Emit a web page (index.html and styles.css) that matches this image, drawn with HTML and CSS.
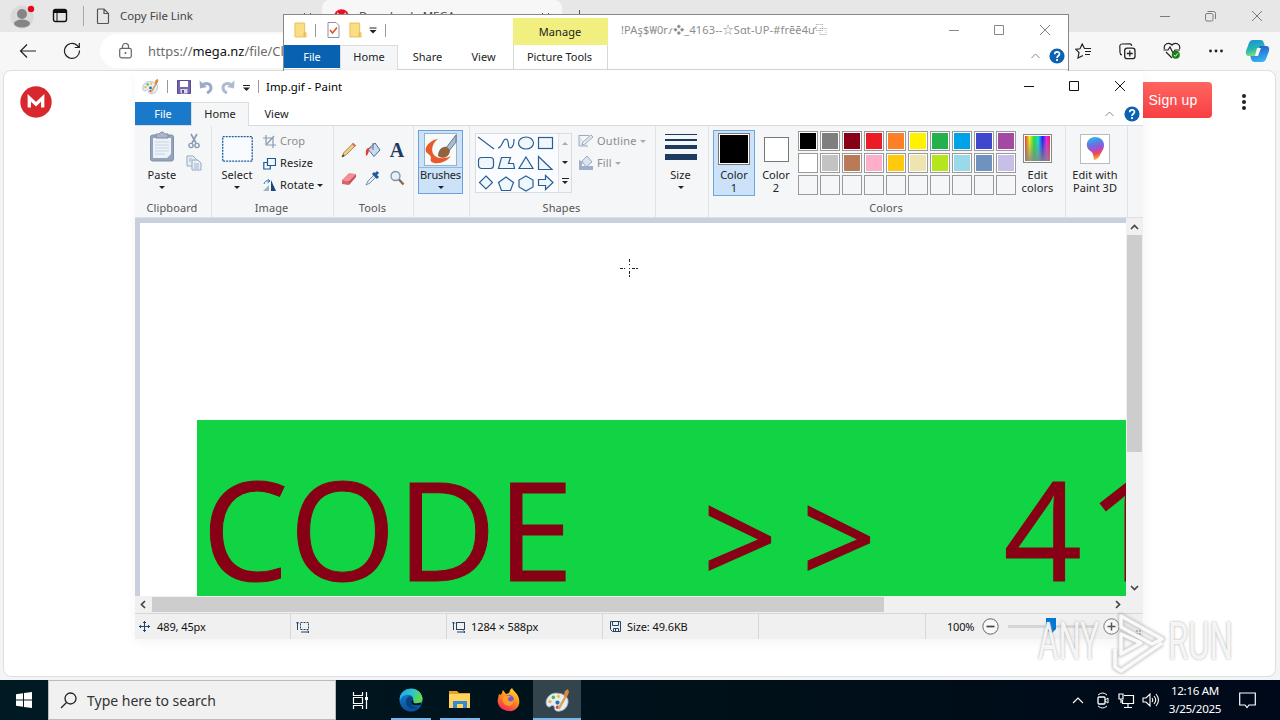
FILE: index.html
```html
<!DOCTYPE html>
<html lang="en">
<head>
<meta charset="utf-8">
<title>Desktop</title>
<link rel="stylesheet" href="styles.css">
</head>
<body>
<svg class="defs" width="0" height="0">
  <defs>
    <linearGradient id="rainbow"><stop offset="0" stop-color="#e33"/><stop offset=".18" stop-color="#ee2"/><stop offset=".36" stop-color="#2d3"/><stop offset=".53" stop-color="#1dd"/><stop offset=".7" stop-color="#22e"/><stop offset=".86" stop-color="#e2e"/><stop offset="1" stop-color="#e23"/></linearGradient>
    <linearGradient id="greyfade" x2="0" y2="1"><stop offset=".1" stop-color="#888" stop-opacity="0"/><stop offset="1" stop-color="#888" stop-opacity=".85"/></linearGradient>
    <linearGradient id="edge1" x1="0" x2="1" y2=".3"><stop offset="0" stop-color="#1fa6e8"/><stop offset=".6" stop-color="#2fc8c0"/><stop offset="1" stop-color="#65d84a"/></linearGradient>
    <linearGradient id="edge2" x2="0" y2="1"><stop offset="0" stop-color="#1483d8"/><stop offset="1" stop-color="#0b4f9c"/></linearGradient>
    <linearGradient id="fire" x1=".8" x2=".3" y2="1"><stop offset="0" stop-color="#ffe226"/><stop offset=".5" stop-color="#ff8a1d"/><stop offset="1" stop-color="#f5225c"/></linearGradient>
    <linearGradient id="cop1" x2=".3" y2="1"><stop offset="0" stop-color="#1b8be0"/><stop offset=".6" stop-color="#23b7b0"/><stop offset="1" stop-color="#7fdc7c"/></linearGradient>
    <linearGradient id="cop2" x2=".3" y2="1"><stop offset="0" stop-color="#2253c7"/><stop offset="1" stop-color="#32b0f2"/></linearGradient>
    <linearGradient id="p3d" x2=".2" y2="1"><stop offset="0" stop-color="#29c5f0"/><stop offset=".35" stop-color="#5a7de0"/><stop offset=".6" stop-color="#a44fd0"/><stop offset=".8" stop-color="#f0465a"/><stop offset="1" stop-color="#fca32c"/></linearGradient>
    <filter id="soft" x="-10%" y="-10%" width="120%" height="120%"><feGaussianBlur stdDeviation="1.1"/></filter>
    <symbol id="palette" viewBox="0 0 24 24"><path d="M12 5C6 4 1 9 1 14c0 3 2 5 4 4 2-2 4-1 4 1 0 3 3 4 6 3 5-1 8-6 7-11-1-3-5-6-10-6z" fill="#e9edf2" stroke="#8aa5bf" stroke-width=".8"/><circle cx="8" cy="9" r="1.7" fill="#56b947"/><circle cx="4.800" cy="13" r="1.600" fill="#e8b64a"/><circle cx="12" cy="14" r="2" fill="#2473b8"/><circle cx="12" cy="18.500" r="1.600" fill="#d43d36"/><circle cx="13" cy="8" r="1.500" fill="#f0c030"/><path d="M20 8l-7 12" stroke="#d9a05c" stroke-width="2.400"/><path d="M18 8l1-5 3-2 1 3-2 5z" fill="#d9873b"/></symbol>
    <symbol id="folder" viewBox="0 0 14 16"><path d="M1 .5h10.500V11H13v4.500H1z" fill="#fbdd84" stroke="#e6bd55"/><path d="M11 11v4" stroke="#d9a93b"/></symbol>
    <symbol id="help" viewBox="0 0 16 16"><circle cx="8" cy="8" r="7.600" fill="#0b62b3"/><path d="M5.700 6.300c0-3.200 4.800-3.100 4.800-.3C10.500 7.800 8 7.800 8 10" fill="none" stroke="#fff" stroke-width="1.700"/><rect x="7.100" y="11.100" width="1.800" height="1.900" fill="#fff"/></symbol>
    <symbol id="winbtns" viewBox="0 0 110 12"><path d="M2 6.500h10M47.500 1.500h9v9h-9zM93 1l10 10M103 1L93 11" fill="none" stroke="currentColor"/></symbol>
    <path id="playmark" d="M87 7l41 23-10 5-31-17zM87 25v20l20-11zM81 40v18l6 4 41-28"/>
  </defs>
</svg>
<div class="screen">

  <section class="browser">
    <header class="tabstrip">
      <svg class="avatar" width="26" height="26" viewBox="0 0 26 26"><circle cx="12" cy="14" r="11.500" fill="#d9d9d9"/><circle cx="12" cy="11" r="5" fill="#858585"/><ellipse cx="12" cy="20.500" rx="8" ry="4" fill="#858585"/><circle cx="21" cy="6" r="3.200" fill="#e00b16"/></svg>
      <svg class="workspaces" width="16" height="16" viewBox="0 0 16 16"><path d="M1.500 3.500q0-2 2-2h9q2 0 2 2v8q0 2-2 2h-9q-2 0-2-2z" fill="none" stroke="#111" stroke-width="1.400"/><path d="M2 3.500h12" stroke="#111" stroke-width="3"/><path d="M5 3v10" stroke="#111"/></svg>
      <i class="tab-divider"></i>
      <div class="tab">
        <svg width="14" height="17" viewBox="0 0 14 17"><path d="M1.500 2q0-1 1-1h5.500l4.500 4.500v9q0 1-1 1h-9q-1 0-1-1zM8 1v4.500h4.500" fill="none" stroke="#555" stroke-width="1.200"/></svg>
        <span>Copy File Link</span>
        <svg class="tab-x" width="9" height="9" viewBox="0 0 9 9"><path d="M1 1l7 7M8 1L1 8" stroke="#555"/></svg>
      </div>
      <div class="tab tab-on">
        <svg width="15" height="15" viewBox="0 0 15 15"><circle cx="7.500" cy="7.500" r="7.300" fill="#ea0f21"/><path d="M4 10V5l3.500 3.500L11 5v5" fill="none" stroke="#fff" stroke-width="1.500"/></svg>
        <span>Download - MEGA</span>
        <svg class="tab-x" width="9" height="9" viewBox="0 0 9 9"><path d="M1 1l7 7M8 1L1 8" stroke="#555"/></svg>
      </div>
      <i class="newtab"></i>
      <svg class="browser-win" width="104" height="12" viewBox="0 0 104 12"><g fill="none" stroke="#7b7b7b"><path d="M1 6.500h10M93 1l10 10M103 1L93 11"/><rect x="46.500" y="3.500" width="7.500" height="7.500" rx="1.500"/><path d="M48.500 1.500h6q2 0 2 2v5.500"/></g></svg>
    </header>
    <div class="toolbar">
      <svg width="18" height="16" viewBox="0 0 18 16"><path d="M1.500 8H17M8 1.500L1.500 8 8 14.500" fill="none" stroke="#222" stroke-width="1.200"/></svg>
      <svg class="reload" width="18" height="18" viewBox="0 0 18 18"><path d="M16.500 8.500a7.500 7.500 0 1 1-2.300-5L16 5.300M16.300 1v4.500h-4.500" fill="none" stroke="#222" stroke-width="1.200"/></svg>
      <div class="address">
        <svg width="13" height="16" viewBox="0 0 13 16"><rect x=".7" y="5.300" width="11.600" height="9.500" rx="1.800" fill="none" stroke="#666" stroke-width="1.200"/><path d="M3.500 5V3.500a3 3 0 0 1 6 0V5" fill="none" stroke="#666" stroke-width="1.200"/><circle cx="6.500" cy="10" r="1" fill="#666"/></svg>
        <span class="url">https://<b>mega.nz</b>/file/ClxQXJ</span>
      </div>
      <div class="tools">
        <svg width="17" height="16" viewBox="0 0 17 16"><path d="M16 5.500H9.500L7.200 1 5 5.800.8 6.300 4 9.500 3 15l5-2.500M10 8.500h6M10 11.500h5" fill="none" stroke="#222" stroke-width="1.200"/></svg>
        <svg width="17" height="17" viewBox="0 0 17 17"><path d="M3 12Q1 11.500 1 9.500L.8 3q.2-2 2-2l8-.2q1.600 0 2 2" fill="none" stroke="#222" stroke-width="1.200"/><rect x="5.700" y="5.200" width="10.300" height="10.500" rx="2.500" fill="none" stroke="#222" stroke-width="1.300"/><path d="M10.800 7.500v6M7.800 10.500h6" stroke="#222" stroke-width="1.300"/></svg>
        <svg width="18" height="18" viewBox="0 0 18 18"><path d="M1.500 7C0 2 6-.5 9 3c3-3.500 9-1 7.500 4M.5 8H5l2-3 3 6 2-3h5M3 10l6 6" fill="none" stroke="#222" stroke-width="1.200"/><circle cx="12.800" cy="12.800" r="4" fill="#168016"/><path d="M10.800 13l1.500 1.300 2.700-3" fill="none" stroke="#fff"/></svg>
        <svg width="16" height="4" viewBox="0 0 16 4"><g fill="#222"><circle cx="2.500" cy="2" r="1.400"/><circle cx="8" cy="2" r="1.400"/><circle cx="13.500" cy="2" r="1.400"/></g></svg>
      </div>
      <svg class="copilot" width="25" height="24" viewBox="0 0 25 24"><path d="M10 1h6q2 0 3 3l1 4h-5q-2 0-3 4l-1 5H4q-4 0-3-5l3-8q1-3 4-3z" fill="url(#cop1)"/><path d="M15 23H9q-2 0-3-3l-.6-3H10q2 0 3-4l1.500-6H21q4 0 3 5l-3 8q-1 3-4 3z" fill="url(#cop2)"/><path d="M12 9h4l-3 8h-3z" fill="#f7f7f7"/></svg>
    </div>
    <div class="viewport">
      <div class="webpage">
        <svg class="mega" width="32" height="32" viewBox="0 0 32 32"><circle cx="16" cy="16" r="15.700" fill="#d9272e"/><path d="M9.300 21.500V11.800l6.700 6.500 6.700-6.500v9.700" fill="none" stroke="#fff" stroke-width="3.300"/></svg>
        <button class="signup">Sign up</button>
        <svg class="kebab" width="6" height="18" viewBox="0 0 6 18"><g fill="#222"><circle cx="3" cy="3" r="2"/><circle cx="3" cy="9" r="2"/><circle cx="3" cy="15" r="2"/></g></svg>
      </div>
    </div>
  </section>

  <section class="explorer">
    <div class="ex-left">
      <div class="ex-quick">
        <svg width="13" height="16"><use href="#folder"/></svg><i class="vline"></i>
        <svg class="gap-a" width="13" height="16" viewBox="0 0 13 16"><path d="M1 .5h8l3 3v12H1z" fill="#fff" stroke="#8d93a0"/><path d="M3 8l2.500 3L10 5.500" fill="none" stroke="#e1542e" stroke-width="1.700"/></svg>
        <svg class="gap-b" width="13" height="16"><use href="#folder"/></svg>
        <svg class="gap-c" width="8" height="7" viewBox="0 0 8 7"><path d="M.5 1h7" stroke="#222"/><path d="M.5 3h7L4 6.500z" fill="#222"/></svg>
        <i class="vline gap-d"></i>
      </div>
      <nav class="ex-tabs"><span class="file">File</span><span class="home">Home</span><span class="share">Share</span><span class="view">View</span></nav>
    </div>
    <div class="ex-manage"><span class="manage">Manage</span><span class="pictools">Picture Tools</span></div>
    <div class="ex-right">
      <div class="ex-title"><span>!PAş$₩0r𐑥❖_4163--☆Sɑt-UP-#frēē4ư<b>⿻</b></span><svg width="110" height="12"><use href="#winbtns"/></svg></div>
      <div class="ex-help"><svg width="9" height="6" viewBox="0 0 9 6"><path d="M.5 5l4-4 4 4" fill="none" stroke="#888"/></svg><svg width="16" height="16"><use href="#help"/></svg></div>
    </div>
  </section>

  <section class="paint">
    <header class="titlebar">
      <svg class="app" width="17" height="17"><use href="#palette"/></svg><i class="vline"></i>
      <svg class="save" width="14" height="14" viewBox="0 0 14 14"><path d="M.5.500h13v13H.500z" fill="#7965ae" stroke="#5b4897"/><rect x="3" y="1" width="8" height="6" fill="#fff"/><rect x="3.500" y="9" width="7" height="4.500" fill="#d8dbe8"/><rect x="5" y="10" width="2" height="3" fill="#5b4897"/></svg>
      <svg class="undo" width="14" height="14" viewBox="0 0 14 14"><path d="M3 5c5-3 9-1 9 3 0 2.500-2 4-4 5" fill="none" stroke="#9aacc9" stroke-width="3"/><path d="M.5.500L1 8.500 8 7z" fill="#9aacc9"/></svg>
      <svg class="redo" width="14" height="14" viewBox="0 0 14 14"><path d="M11 5C6 2 2 4 2 8c0 2.500 2 4 4 5" fill="none" stroke="#adbbd1" stroke-width="3"/><path d="M13.500.500L13 8.500 6 7z" fill="#adbbd1"/></svg>
      <svg class="drop" width="7" height="6" viewBox="0 0 7 6"><path d="M0 .5h7" stroke="#222"/><path d="M0 2.500h7L3.500 6z" fill="#222"/></svg>
      <i class="vline vl2"></i>
      <h1>Imp.gif - Paint</h1>
      <svg class="winbtns" width="110" height="12"><use href="#winbtns"/></svg>
    </header>
    <nav class="tabs"><span class="file">File</span><span class="home">Home</span><span class="view">View</span>
      <div class="tabs-end"><svg width="9" height="6" viewBox="0 0 9 6"><path d="M.5 5l4-4 4 4" fill="none" stroke="#888"/></svg><svg width="16" height="16"><use href="#help"/></svg></div>
    </nav>

    <div class="ribbon">
      <div class="group g-clip">
        <div class="body">
          <div class="big paste">
            <svg width="26" height="32" viewBox="0 0 26 32"><rect x="1.500" y="4" width="23" height="26" rx="2" fill="#95a3bb" stroke="#8291ab"/><path d="M4 7h18v16l-4 4H4z" fill="#edf1f8"/><path d="M6 11h14M6 14h14M6 17h14M6 20h14M6 23h10" stroke="#c9d4e6"/><path d="M7 3h3q3-4 6 0h3v4H7z" fill="#aab5c8" stroke="#7e8ba2"/></svg>
            <span>Paste</span><i class="arrow"></i>
          </div>
          <div class="cutcopy">
            <svg width="12" height="16" viewBox="0 0 12 16"><path d="M3 1l5 9M9 1l-5 9" stroke="#8c99b3" stroke-width="1.600"/><circle cx="3" cy="12.500" r="2.100" fill="none" stroke="#8c99b3" stroke-width="1.400"/><circle cx="9" cy="12.500" r="2.100" fill="none" stroke="#8c99b3" stroke-width="1.400"/></svg>
            <svg width="16" height="16" viewBox="0 0 16 16"><path d="M1 1h6l3 3v7H1z" fill="#e9eef6" stroke="#9aa8c0"/><path d="M6 5h6l3 3v7H6z" fill="#e9eef6" stroke="#9aa8c0"/><path d="M3 4h3M3 6h2M8 9h5M8 11h5M8 13h5" stroke="#9fb2d3"/></svg>
          </div>
        </div>
        <h2>Clipboard</h2>
      </div>
      <div class="group g-image">
        <div class="body">
          <div class="big select">
            <svg width="31" height="26" viewBox="0 0 31 26"><rect x=".7" y=".7" width="29.500" height="24.500" fill="#f8fbff" stroke="#1d5c9c" stroke-width="1.300" stroke-dasharray="2 1"/></svg>
            <span>Select</span><i class="arrow"></i>
          </div>
          <div class="stack">
            <div class="dim"><svg width="13" height="13" viewBox="0 0 13 13"><path d="M3 0v10h10M0 3h10v10M4 9l7-8" fill="none" stroke="#8a9ab3" stroke-width="1.200"/></svg><span>Crop</span></div>
            <div><svg width="13" height="13" viewBox="0 0 13 13"><path d="M4.500 1.500h8v7h-8zM4 5.500H.8V12h6.500V9" fill="#f2f8ff" stroke="#20598f" stroke-width="1.200"/></svg><span class="resize">Resize</span></div>
            <div><svg width="13" height="13" viewBox="0 0 13 13"><path d="M0 12h6V6z" fill="#9db4c8"/><path d="M8 1v11h5z" fill="#174b7c"/><path d="M1 5q1-4 5-3M4.500 0L7 2 4.500 4" fill="none" stroke="#2a6db0"/></svg><span class="rotate">Rotate</span><i class="arrow"></i></div>
          </div>
        </div>
        <h2>Image</h2>
      </div>
      <div class="group g-tools">
        <div class="body toolgrid">
          <svg width="16" height="16" viewBox="0 0 16 16"><path d="M1 15l2-4.500 9-9 2.200 2.200-9 9z" fill="#f3d28a" stroke="#8c6a2b" stroke-width=".8"/><path d="M1 15l1-2.500L3.500 14z" fill="#222"/><path d="M11.500 1.500l3 2.800" stroke="#d76f5f" stroke-width="2"/></svg>
          <svg width="16" height="16" viewBox="0 0 16 16"><path d="M3 7l7-6 5 7-6 6.500z" fill="#c7dcef" stroke="#4e7093"/><path d="M8 1v7" stroke="#56728c"/><path d="M4 6C1 6 .5 9 1 14c2-1 3-4 3-7l5-2z" fill="#d9432e"/></svg>
          <b class="letter">A</b>
          <svg width="16" height="16" viewBox="0 0 16 16"><path d="M1 10l7-7 7 1-7 7z" fill="#ef8f96"/><path d="M1 10l7 1v4l-7-1z" fill="#d9646b"/><path d="M8 11l7-7v3l-7 8z" fill="#c84e57"/></svg>
          <svg width="16" height="16" viewBox="0 0 16 16"><path d="M1 15l2-4 6-6 2 2-6 6z" fill="#e4edf5" stroke="#54789c" stroke-width=".8"/><path d="M8 3l5 5M10 5l3-3" stroke="#1d5ca0" stroke-width="3"/></svg>
          <svg width="16" height="16" viewBox="0 0 16 16"><circle cx="6.500" cy="6" r="4.500" fill="#e3f0fa" stroke="#8391a0" stroke-width="1.300"/><path d="M10 9.500l4.500 5" stroke="#80684f" stroke-width="2.300"/></svg>
        </div>
        <h2>Tools</h2>
      </div>
      <div class="group g-brush">
        <div class="brush-btn">
          <svg width="33" height="33" viewBox="0 0 33 33"><rect x=".5" y=".5" width="32" height="32" fill="#f7fafb" stroke="#9bb1c6"/><path d="M14 6C7 7 0 13 2 19c2 2 5 3 5 6-1 3 0 4 3 5 7 1 13-2 17-7-6 3-12 3-16 0-5-4-3-13 3-17z" fill="#e85a29"/><path d="M32 2L22 15l3 3 7-9z" fill="#aebdc9" stroke="#60798f"/><path d="M23 14c-5-1-9 3-9 9 5 4 12 1 12-6z" fill="#91643e"/></svg>
          <span>Brushes</span><i class="arrow"></i>
        </div>
      </div>
      <div class="group g-shapes">
        <div class="body">
          <div class="gallery">
            <svg width="82" height="58" viewBox="0 0 82 58"><g fill="#eff6fc" stroke="#2b5f94" stroke-width="1.200"><path d="M2 3l16 12" /><path d="M22 14c5-1 4-9 8-9 4 1 1 9 4 9 3 0 4-3 4-9" fill="none"/><ellipse cx="50" cy="9" rx="7.500" ry="6"/><rect x="62.500" y="3.500" width="14" height="11"/><rect x="2.500" y="23.500" width="15" height="11" rx="3"/><path d="M22.500 34.500l3-11h9l-2 6h5l1 5z"/><path d="M50 23l7 11.500H43z"/><path d="M62.500 22.500v13h13.500z"/><path d="M10 42l6.500 6.500L10 55l-6.500-6.500z"/><path d="M30 43l7.500 5.500-3 8h-9l-3-8z"/><path d="M50 42l7 4v7l-7 4-7-4v-7z"/><path d="M62.500 45.500h7v-4l7.500 7-7.500 7v-4h-7z"/></g></svg>
            <div class="gscroll"><i class="up"></i><i class="arrow"></i><i class="arrow bar"></i></div>
          </div>
          <div class="stack dim">
            <div><svg width="16" height="14" viewBox="0 0 16 14"><path d="M1 1.500h10M1 1v11h9M4 11l1-3 8-7 2 2-8 7z" fill="#e2e8f0" stroke="#9eabc0"/></svg><span class="outline">Outline</span><i class="arrow"></i></div>
            <div><svg width="16" height="16" viewBox="0 0 16 16"><path d="M4 6l5-5 5 6-6 5z" fill="#dce4ef" stroke="#9eabc0"/><path d="M1 5l4 2-2 5H1zM1 11h14v4H1z" fill="#9eafc9"/></svg><span class="fill">Fill</span><i class="arrow"></i></div>
          </div>
        </div>
        <h2>Shapes</h2>
      </div>
      <div class="group g-size">
        <div class="big">
          <svg width="32" height="32" viewBox="0 0 32 32"><path d="M0 3.500h32" stroke="#1f3a5f"/><path d="M0 9h32" stroke="#1f3a5f" stroke-width="2"/><path d="M0 16h32" stroke="#1f3a5f" stroke-width="4"/><path d="M0 26h32" stroke="#1f3a5f" stroke-width="6"/></svg>
          <span>Size</span><i class="arrow"></i>
        </div>
      </div>
      <div class="group g-colors">
        <div class="body">
          <div class="colorbtn on"><i class="chip black"></i><span>Color<br>1</span></div>
          <div class="colorbtn"><i class="chip white"></i><span>Color<br>2</span></div>
          <div class="swatches">
            <i style="background:#000"></i><i style="background:#7f7f7f"></i><i style="background:#880015"></i><i style="background:#ed1c24"></i><i style="background:#ff7f27"></i><i style="background:#fff200"></i><i style="background:#22b14c"></i><i style="background:#00a2e8"></i><i style="background:#3f48cc"></i><i style="background:#a349a4"></i>
            <i style="background:#fff"></i><i style="background:#c3c3c3"></i><i style="background:#b97a57"></i><i style="background:#ffaec9"></i><i style="background:#ffc90e"></i><i style="background:#efe4b0"></i><i style="background:#b5e61d"></i><i style="background:#99d9ea"></i><i style="background:#7092be"></i><i style="background:#c8bfe7"></i>
            <i class="empty"></i><i class="empty"></i><i class="empty"></i><i class="empty"></i><i class="empty"></i><i class="empty"></i><i class="empty"></i><i class="empty"></i><i class="empty"></i><i class="empty"></i>
          </div>
          <div class="edit"><svg width="29" height="29" viewBox="0 0 29 29"><rect x=".5" y=".5" width="28" height="28" fill="#fff" stroke="#888"/><path d="M2 2h25v25H2z" fill="url(#rainbow)"/><path d="M2 2h25v25H2z" fill="url(#greyfade)"/></svg><span>Edit<br>colors</span></div>
        </div>
        <h2>Colors</h2>
      </div>
      <div class="group g-3d">
        <div class="edit"><svg width="30" height="30" viewBox="0 0 30 30"><rect x=".5" y=".5" width="29" height="29" fill="#fff" stroke="#bbb"/><path d="M15 3c-5 0-9 4-8 9 0 4 5 5 6 8l1 6c5-1 6-5 7-7 1-2 3-4 3-8 0-5-4-8-9-8z" fill="url(#p3d)"/></svg><span>Edit with<br>Paint 3D</span></div>
      </div>
    </div>

    <div class="workarea">
      <div class="canvas">
        <div class="artwork"><span>CODE</span><span class="gt">&gt;</span><span class="gt gt2">&gt;</span><span class="four">4</span><span class="one">1</span></div>
        <svg class="cursor" width="20" height="20" viewBox="0 0 20 20"><path d="M0 9.500h3M4 9.500h1M9 9.500h1M12 9.500h3M16 9.500h2M9.500 0v3M9.500 5v1M9.500 12v3M9.500 16v2" stroke="#222"/></svg>
      </div>
      <div class="vscroll"><svg width="9" height="6" viewBox="0 0 9 6"><path d="M1 5l3.500-3.500L8 5" fill="none" stroke="#444" stroke-width="1.700"/></svg><i class="vthumb"></i><svg class="down" width="9" height="6" viewBox="0 0 9 6"><path d="M1 1l3.500 3.500L8 1" fill="none" stroke="#444" stroke-width="1.700"/></svg></div>
    </div>
    <div class="hscroll"><svg width="6" height="9" viewBox="0 0 6 9"><path d="M5 1L1.500 4.500 5 8" fill="none" stroke="#444" stroke-width="1.700"/></svg><i class="hthumb"></i><svg class="right" width="6" height="9" viewBox="0 0 6 9"><path d="M1 1l3.500 3.500L1 8" fill="none" stroke="#444" stroke-width="1.700"/></svg></div>
    <footer class="status">
      <div class="s1"><svg width="11" height="11" viewBox="0 0 11 11"><path d="M5.500 0v11M0 5.500h11M4 2l1.500-1.500L7 2M4 9l1.500 1.500L7 9M2 4L.5 5.500 2 7M9 4l1.500 1.500L9 7" fill="none" stroke="#234567"/></svg><span>489, 45px</span></div>
      <div class="s2"><svg width="14" height="12" viewBox="0 0 14 12"><path d="M1.500 9V1M0 2.500L1.500 1 3 2.500M5 11h8M11.500 9.500L13 11l-1.500 1" fill="none" stroke="#234567"/><rect x="4.500" y="1.500" width="8" height="7" fill="none" stroke="#234567" stroke-dasharray="2 1"/></svg></div>
      <div class="s3"><svg width="14" height="12" viewBox="0 0 14 12"><path d="M1.500 9V1M0 2.500L1.500 1 3 2.500M5 11h8M11.500 9.500L13 11l-1.500 1" fill="none" stroke="#234567"/><rect x="4.500" y="1.500" width="8" height="7" fill="none" stroke="#234567"/></svg><span>1284 × 588px</span></div>
      <div class="s4"><svg width="11" height="11" viewBox="0 0 11 11"><path d="M.5.500h10v10h-8l-2-2zM2.500.500v4h6v-4M3.500 10.500v-3h5v3M5.500 8v2" fill="none" stroke="#234567"/></svg><span>Size: 49.6KB</span></div>
      <div class="s5"></div>
      <div class="zoom"><span>100%</span><svg width="17" height="17" viewBox="0 0 17 17"><circle cx="8.500" cy="8.500" r="7.700" fill="#f8f8f8" stroke="#666"/><path d="M4.500 8.500h8" stroke="#444" stroke-width="1.700"/></svg>
        <svg class="slider" width="88" height="18" viewBox="0 0 88 18"><path d="M0 8.500h88" stroke="#d6d6d6" stroke-width="3"/><path d="M38 0h10v11l-5 5-5-5z" fill="#0078d7"/></svg>
        <svg class="plus" width="17" height="17" viewBox="0 0 17 17"><circle cx="8.500" cy="8.500" r="7.700" fill="#f8f8f8" stroke="#777"/><path d="M4.500 8.500h8M8.500 4.500v8" stroke="#555" stroke-width="1.500"/></svg>
        <svg class="grip" width="9" height="9" viewBox="0 0 9 9"><path d="M6 0h2v2H6zM3 3h2v2H3zM6 3h2v2H6zM0 6h2v2H0zM3 6h2v2H3zM6 6h2v2H6z" fill="#b5b5b5"/></svg></div>
    </footer>
  </section>

  <footer class="taskbar">
    <div class="start"><svg width="16" height="16" viewBox="0 0 16 16"><path d="M0 2.200L7 1.200v6.300H0zM8 1l8-1v7.500H8zM0 8.500h7v6.300l-7-1zM8 8.500h8V16l-8-1z" fill="#fff"/></svg></div>
    <div class="search"><svg width="17" height="17" viewBox="0 0 17 17"><circle cx="10.500" cy="6.500" r="5.500" fill="none" stroke="#222" stroke-width="1.300"/><path d="M6.500 10.500L1 16" stroke="#222" stroke-width="1.300"/></svg><span>Type here to search</span></div>
    <div class="item first"><svg width="17" height="17" viewBox="0 0 17 17"><path d="M1.500 0v3.500h9V0M1.500 5.500h9v6h-9zM1.500 17v-3.500h9V17M14.500 0v17" fill="none" stroke="#fff" stroke-width="1.200"/><path d="M13 5h3v3h-3z" fill="#fff"/></svg></div>
    <div class="item run"><svg width="24" height="24" viewBox="0 0 24 24"><circle cx="12" cy="12" r="11.500" fill="url(#edge2)"/><path d="M.8 10C2-1 20-3 23.300 9c1.500 6-5 9-9.300 7-2-1-1-3 0-4 1-4-3-6-7-5C3 8 1 11 1 14z" fill="url(#edge1)"/><path d="M9 9c-6 6 1 16 11 10-5 1-9-2-6-6 1-3-2-6-5-4z" fill="#07447f"/><path d="M14 12.500c-2 3 1 5 8 3" fill="none" stroke="#001821" stroke-width="2"/></svg></div>
    <div class="item run"><svg width="22" height="20" viewBox="0 0 22 20"><path d="M0 1h8l2 2h11v15H0z" fill="#e6a323"/><path d="M0 4h21v14H0z" fill="#ffd35c"/><path d="M4 18v-7h14v7h-4v-4H8v4z" fill="#348ad4"/></svg></div>
    <div class="item"><svg width="24" height="24" viewBox="0 0 24 24"><path d="M2 6l2 1 2-5 3 4 3-1q1-4 3-5c1 3 6 5 7 11 2 8-5 13-10 12C5 23 0 18 .7 12z" fill="url(#fire)"/><circle cx="12" cy="12" r="5" fill="#7952e6"/><path d="M7 8c3 0 5-1 7 1-3 0-4 2-2 4 2 1 4 0 5-2 0 6-4 8-8 6-4-2-4-6-2-9z" fill="#ff9c24"/></svg></div>
    <div class="item run active"><svg width="25" height="25"><use href="#palette"/></svg></div>
    <div class="tray">
      <svg width="12" height="8" viewBox="0 0 12 8"><path d="M1 7l5-5 5 5" fill="none" stroke="#fff" stroke-width="1.200"/></svg>
      <svg class="t2" width="12" height="17" viewBox="0 0 12 17"><path d="M1 3q4.500-4 9 0M1 14q4.500 4 9 0" fill="none" stroke="#fff"/><rect x="1" y="5" width="7" height="7" rx="1" fill="none" stroke="#fff" stroke-width="1.300"/><path d="M8 8l3-2v5L8 9" fill="none" stroke="#fff"/></svg>
      <svg class="t3" width="17" height="15" viewBox="0 0 17 15"><path d="M6 2.500h9.500v8H4.500V7M10 11v3M6 14.500h8M1 1h4v5H1zM3 6v4" fill="none" stroke="#fff" stroke-width="1.200"/></svg>
      <svg class="t4" width="18" height="14" viewBox="0 0 18 14"><path d="M1 5h3l4-4v12L4 9H1zM10 5q1.500 2 0 4M12 3q3.500 4 0 8M14 1q5 6 0 12" fill="none" stroke="#fff" stroke-width="1.100"/></svg>
      <div class="clock">12:16 AM<br>3/25/2025</div>
      <svg class="t5" width="17" height="17" viewBox="0 0 17 17"><path d="M.7 1h15.600v12H10l-2 2.500L6 13H.7z" fill="none" stroke="#fff" stroke-width="1.200"/></svg>
    </div>
  </footer>

  <svg class="watermark" width="204" height="66" viewBox="0 0 204 66">
    <use href="#playmark" class="mark-shade"/><use href="#playmark" class="mark"/>
    <g class="mark-text"><text x="4" y="50" textLength="61" lengthAdjust="spacingAndGlyphs">ANY</text><text x="134" y="50" textLength="65" lengthAdjust="spacingAndGlyphs">RUN</text></g>
  </svg>
</div>
</body>
</html>
```
FILE: styles.css
```css
* { box-sizing: border-box; }
body { margin: 0; font: 11px/14px "Noto Sans", "Open Sans", "Noto Sans CJK JP", sans-serif; color: #222; }
svg { display: block; flex: none; }
i { display: block; flex: none; }
h1, h2 { margin: 0; font-weight: 400; }
span { white-space: nowrap; }
.defs { position: absolute; }
.screen { position: relative; width: 1280px; height: 720px; overflow: hidden; background: #f3f4f6; }

/* browser */
.browser { display: flex; flex-direction: column; height: 680px; background: #f7f7f7; }
.tabstrip { display: flex; align-items: center; height: 32px; background: #e7e7e7; padding-left: 10px; }
.avatar { margin-top: -1px; }
.workspaces { margin-left: 16px; }
.tab-divider { width: 1px; height: 20px; margin-left: 15px; background: #aaa; }
.tab { display: flex; align-items: center; width: 238px; height: 32px; padding: 0 10px 0 12px; color: #444; }
.tab span { margin-left: 10px; font-size: 11.400px; }
.tab-x { margin-left: auto; }
.tab-on { width: 240px; padding: 0 12px; background: #f7f7f7; border-radius: 8px 8px 0 0; }
.newtab { width: 1px; height: 13px; margin-left: 17px; background: #555; }
.browser-win { margin-left: auto; margin-right: 17px; }
.toolbar { display: flex; align-items: center; height: 38px; padding-left: 19px; }
.reload { margin-left: 26px; }
.address { display: flex; align-items: center; width: 900px; height: 34px; margin-left: 19px; padding-left: 19px; border-radius: 17px; background: #fff; }
.url { margin-left: 16px; font-size: 12.900px; color: #6b6b6b; }
.url b { font-weight: 400; color: #111; }
.tools { display: flex; align-items: center; gap: 27px; margin-left: 75px; }
.copilot { margin-left: 21px; margin-right: 9px; }
.viewport { flex: 1; padding: 0 4px 3px 3px; background: #f3f4f6; }
.webpage { display: flex; align-items: flex-start; height: 607px; padding: 16px 28px 0 17px; background: #fff; border: 1px solid #dedede; border-radius: 8px; }
.mega { margin-top: -1px; margin-left: -1px; }
.signup { width: 80px; height: 36px; margin: -5px 0 0 auto; padding: 0 0 0 2px; border: 0; border-radius: 4px; color: #fff; background: linear-gradient(#ff6660, #f83f43); font: 14px "Liberation Sans", sans-serif; letter-spacing: .2px; }
.kebab { margin: 6px 0 0 29px; }

/* file explorer */
.explorer { position: absolute; left: 283px; top: 14px; display: flex; width: 786px; height: 57px; background: #fff; border: 1px solid #888; border-bottom: 0; }
.ex-left { width: 229px; }
.ex-quick { display: flex; align-items: center; height: 30px; padding-left: 10px; }
.vline { width: 1px; height: 13px; margin-left: 8px; background: #999; }
.gap-a { margin-left: 11px; }
.gap-b { margin-left: 9px; }
.gap-c { margin-left: 7px; }
.gap-d { margin-left: 8px; }
.ex-tabs { display: flex; height: 25px; border-bottom: 1px solid #d5d7da; line-height: 24px; }
.ex-tabs span { text-align: center; }
.ex-tabs .file { width: 56px; height: 23px; color: #fff; background: #0862b1; }
.ex-tabs .home { width: 58px; height: 25px; line-height: 22px; border: 1px solid #ddd; border-bottom: 0; background: #f5f6f7; }
.ex-tabs .share { width: 59px; }
.ex-tabs .view { width: 53px; }
.ex-manage { display: flex; flex-direction: column; width: 95px; padding-top: 3px; text-align: center; }
.manage { height: 27px; line-height: 28px; padding-right: 1px; background: #f1ef80; letter-spacing: .1px; }
.pictools { height: 25px; line-height: 24px; padding-right: 2px; border: solid #d5d7da; border-width: 0 1px 1px; letter-spacing: -.05px; }
.ex-right { flex: 1; }
.ex-title { display: flex; justify-content: space-between; align-items: center; height: 30px; padding: 0 11px 0 13px; color: #8c8c8c; }
.ex-title span { letter-spacing: .15px; }
.ex-title b { color: #666; }
.ex-title svg { color: #888; margin-top: -1px; }
.ex-help { display: flex; justify-content: flex-end; align-items: center; gap: 9px; height: 25px; padding: 0 3px 3px; border-bottom: 1px solid #d5d7da; }

/* paint window */
.paint { position: absolute; left: 135px; top: 71px; display: flex; flex-direction: column; width: 1008px; height: 568px; background: #fff; box-shadow: 1px 3px 12px #0000000d; }
.titlebar { display: flex; align-items: center; height: 31px; padding-left: 7px; }
.titlebar .save { margin-left: 9px; }
.titlebar .undo { margin-left: 8px; }
.titlebar .redo { margin-left: 8px; }
.titlebar .drop { margin-left: 8px; margin-top: 3px; }
.titlebar h1 { margin-left: 7px; font-size: 11.400px; color: #000; letter-spacing: .05px; }
.winbtns { margin-left: auto; margin-right: 11px; margin-top: -1px; color: #111; }
.tabs { display: flex; height: 24px; border-bottom: 1px solid #d9dbde; line-height: 24px; text-align: center; }
.tabs .file { width: 56px; height: 23px; color: #fff; background: #1979ca; }
.tabs .home { width: 58px; height: 24px; line-height: 22px; border: 1px solid #ddd; border-bottom: 0; background: #f5f6f7; }
.tabs .view { width: 55px; }
.tabs-end { display: flex; align-items: center; gap: 10px; margin-left: auto; padding-right: 3px; }

/* ribbon */
.ribbon { display: flex; height: 92px; background: #f5f6f8; border-bottom: 1px solid #dcdfe3; }
.group { display: flex; flex-direction: column; flex: none; height: 91px; border-right: 1px solid #e0e2e4; letter-spacing: .1px; }
.group h2 { margin-top: auto; padding: 0 2px 2px 0; font-size: 11px; text-align: center; color: #555; }
.body { display: flex; }
.arrow { width: 0; height: 0; border: solid transparent; border-width: 3px 3px 0; border-top-color: #222; }
.up { width: 0; height: 0; border: solid transparent; border-width: 0 3px 3px; border-bottom-color: #aaa; }
.big { display: flex; flex-direction: column; align-items: center; }
.big .arrow { margin-top: 4px; }
.g-clip { width: 77px; }
.paste { width: 40px; margin-left: 7px; padding-top: 5px; }
.paste span { margin-top: 5px; }
.cutcopy { display: flex; flex-direction: column; align-items: center; gap: 6px; padding: 7px 0 0 4px; }
.g-image { width: 122px; }
.select { width: 40px; margin-left: 5px; padding-top: 10px; }
.select span { margin-top: 6px; }
.stack { display: flex; flex-direction: column; padding-top: 4px; }
.stack > div { display: flex; align-items: center; height: 22px; }
.stack span { margin-left: 4px; }
.stack .arrow { margin-left: 3px; }
.g-image .stack { margin-left: 6px; }
.dim { color: #8c8c8c; }
.dim .arrow { border-top-color: #aaa; }
.g-tools { width: 80px; }
.toolgrid { display: grid; grid-template-columns: repeat(3, 24px); grid-template-rows: repeat(2, 28px); padding: 10px 0 0 3px; place-items: center; }
.letter { font: 700 20px/20px "Liberation Serif", serif; color: #1f3a5f; }
.g-brush { width: 56px; }
.brush-btn { display: flex; flex-direction: column; align-items: center; width: 45px; height: 64px; margin: 4px 0 0 4px; padding-top: 2px; border: 1px solid #6ca0dc; background: #cce2f8; }
.brush-btn span { margin-top: 1px; width: 43px; border-top: 1px solid #90b8e6; text-align: center; letter-spacing: -.15px; }
.brush-btn .arrow { margin-top: 4px; }
.g-shapes { width: 186px; }
.gallery { display: flex; width: 97px; height: 60px; margin: 7px 0 0 5px; border: 1px solid #d9dce0; background: #fafcff; }
.gscroll { display: flex; flex-direction: column; align-items: center; justify-content: space-around; width: 14px; border-left: 1px solid #e1e3e6; background: #f5f6f8; }
.bar::before { content: ""; display: block; width: 7px; height: 1px; margin: -6px 0 0 -3px; background: #222; }
.g-shapes .stack { margin-left: 6px; }
.g-shapes .stack span { margin-left: 3px; }
.g-shapes .stack .outline { letter-spacing: .25px; }
.g-size { width: 53px; }
.g-size .big { width: 49px; padding-top: 5px; }
.g-size span { margin-top: 5px; }
.g-colors { width: 357px; }
.colorbtn { display: flex; flex-direction: column; align-items: center; width: 42px; height: 66px; line-height: 13px; text-align: center; letter-spacing: 0; }
.g-colors .body { padding: 4px 0 0 4px; }
.colorbtn.on { background: #cce2f8; border: 1px solid #72a5dc; }
.chip { border: 1px solid #777; box-shadow: inset 0 0 0 1px #fff; }
.black { width: 32px; height: 32px; margin: 2px 0 3px; background: #000; }
.white { width: 25px; height: 25px; margin: 7px 0 6px; background: #fff; }
.swatches { display: grid; grid-template-columns: repeat(10, 22px); grid-template-rows: repeat(3, 22px); margin: 1px 0 0 1px; }
.swatches i { width: 20px; height: 20px; border: 1px solid #9a9a9a; box-shadow: inset 0 0 0 1px #fff; }
.swatches .empty { box-shadow: none; }
.edit { display: flex; flex-direction: column; align-items: center; line-height: 13px; text-align: center; }
.edit span { margin-top: 5px; }
.g-colors .edit { width: 42px; padding: 4px 3px 0 0; }
.g-3d { width: 62px; padding-top: 8px; }
.g-3d .edit { padding-right: 3px; }
.g-3d .edit span { margin-top: 4px; letter-spacing: .05px; }

/* drawing area */
.workarea { display: flex; height: 378px; }
.canvas { position: relative; width: 991px; overflow: hidden; border: solid #c8d0de; border-width: 5px 0 0 5px; background: #fff; }
.artwork { display: flex; width: 930px; height: 176px; margin: 197px 0 0 57px; overflow: hidden; padding: 13px 0 0 5px; background: #11d444; color: #880015; font: 137px/190px "Open Sans", "Noto Sans", sans-serif; -webkit-text-stroke: 1px #880015; }
.artwork span { flex: none; height: 190px; letter-spacing: 1px; }
.artwork .gt { width: 79px; margin: 7px 0 0 128px; font-size: 131px; }
.artwork .gt2 { margin-left: 20px; }
.four { margin-left: 123px; }
.one { margin-left: 5px; }
.cursor { position: absolute; left: 480px; top: 36px; }
.vscroll { display: flex; flex-direction: column; align-items: center; width: 17px; padding: 6px 0 5px; background: #f0f0f0; }
.vthumb { width: 15px; height: 217px; margin-top: 5px; background: #cdcdcd; }
.down { margin-top: auto; }
.hscroll { display: flex; align-items: center; height: 17px; padding: 0 22px 0 5px; background: #f0f0f0; }
.hthumb { width: 732px; height: 15px; margin-left: 6px; background: #cdcdcd; }
.right { margin-left: auto; }
.status { display: flex; flex: 1; background: #f0f0f0; border-top: 1px solid #d7d7d7; color: #111; }
.status > div { display: flex; align-items: center; gap: 6px; width: 156px; padding-left: 5px; border-right: 1px solid #d7d7d7; letter-spacing: -.1px; }
.status .s1 { padding-left: 4px; gap: 7px; }
.status .s3 { gap: 5px; }
.status .s4 { padding-left: 7px; }
.status .s5 { width: 167px; }
.status .zoom { flex: 1; gap: 0; padding-left: 21px; border: 0; letter-spacing: -.2px; }
.zoom span { width: 35px; }
.slider { margin-left: 9px; }
.plus { margin-left: 7px; }
.grip { margin: 10px 0 0 13px; }

/* taskbar */
.taskbar { display: flex; height: 40px; background: linear-gradient(90deg, #001923, #001019 60%, #00091a); }
.start { display: flex; align-items: center; justify-content: center; width: 48px; }
.search { display: flex; align-items: center; width: 288px; padding-left: 11px; background: #f1f1f1; border: 1px solid #bbb; color: #333; font-size: 14px; }
.search span { margin: 2px 0 0 10px; }
.item { display: flex; align-items: center; justify-content: center; width: 49px; }
.item.first { width: 50px; padding-right: 2px; }
.item.run { background: linear-gradient(#76b9ed, #76b9ed) center bottom / 40px 2px no-repeat; }
.item.active { width: 48px; background: linear-gradient(#76b9ed, #76b9ed) center bottom / 48px 2px no-repeat #33444d; }
.tray { display: flex; align-items: center; margin-left: auto; padding-right: 24px; color: #fff; }
.t2 { margin-left: 13px; }
.t3 { margin-left: 9px; }
.t4 { margin-left: 7px; }
.clock { width: 60px; margin-left: 5px; line-height: 18px; text-align: center; font-size: 11.600px; letter-spacing: -.3px; }
.t5 { margin-left: 14px; }

/* watermark */
.watermark { position: absolute; left: 1034px; top: 609px; font: 52px "Roboto", sans-serif; }
.mark { fill: none; stroke: #ffffffe0; stroke-width: 3.500px; stroke-linejoin: round; }
.mark-shade { fill: none; stroke: #a0a0a070; stroke-width: 7px; stroke-linejoin: round; filter: url(#soft); }
.mark-text { fill: #ffffffe0; text-shadow: 0 0 3px #999; }
```
